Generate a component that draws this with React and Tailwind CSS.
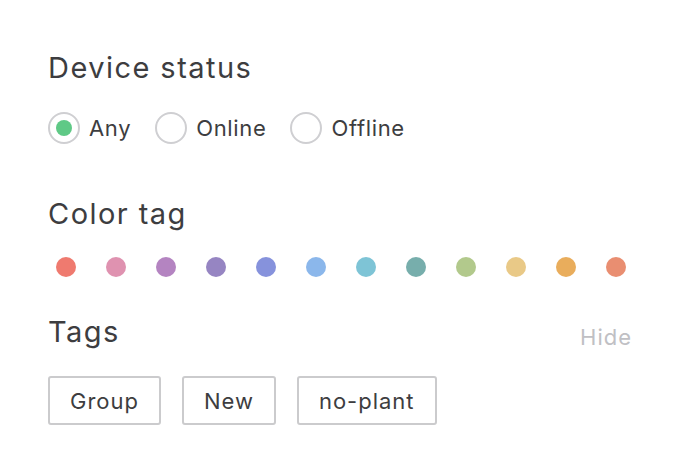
import { useState } from 'react';

const statuses = ['Any', 'Online', 'Offline'];

const colors = [
  '#ef7a6f', '#df92b0', '#b484c1', '#9685c2', '#8692dc', '#8bb7eb',
  '#7ec4d6', '#77aeac', '#b2c98c', '#e9c987', '#e9ad5c', '#e98e71',
];

const tags = ['Group', 'New', 'no-plant'];

const App = () => {
  const [status, setStatus] = useState('Any');

  return (
    <div className="w-[680px] h-[476px] bg-white px-12 pt-[51px] text-[#3d3d40] font-['Inter','Noto_Sans',sans-serif]">
      <h2 className="text-[29px] leading-[34px] tracking-[0.05em] font-normal">Device status</h2>
      <div className="flex items-center gap-6 mt-[27px]">
        {statuses.map((s) => (
          <label key={s} className="flex items-center gap-[9px] cursor-pointer" onClick={() => setStatus(s)}>
            <span className="w-8 h-8 rounded-full border-2 border-[#cfcfd2] flex items-center justify-center">
              {status === s && <span className="w-4 h-4 rounded-full bg-[#5fc986]" />}
            </span>
            <span className="text-[22px] leading-8 tracking-[0.03em]">{s}</span>
          </label>
        ))}
      </div>

      <h2 className="text-[29px] leading-[34px] tracking-[0.05em] font-normal mt-[53px]">Color tag</h2>
      <div className="flex items-center gap-[30px] mt-[26px] ml-2">
        {colors.map((c) => (
          <span key={c} className="w-5 h-5 rounded-full" style={{ backgroundColor: c }} />
        ))}
      </div>

      <div className="flex items-end justify-between mt-[38px]">
        <h2 className="text-[29px] leading-[34px] tracking-[0.05em] font-normal">Tags</h2>
        <button className="text-[22px] leading-6 tracking-[0.045em] text-[#c0c0c4]">Hide</button>
      </div>
      <div className="flex items-center gap-[21px] mt-[27px]">
        {tags.map((t) => (
          <button key={t} className="h-[49px] px-5 border-2 border-[#cbcbcd] rounded-[3px] text-[22px] leading-none tracking-[0.045em]">
            {t}
          </button>
        ))}
      </div>
    </div>
  );
};

export default App;
